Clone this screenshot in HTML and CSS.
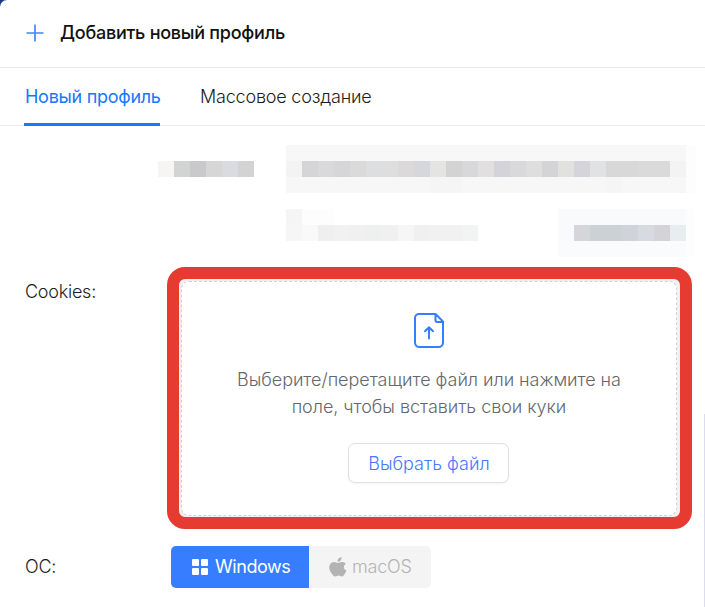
FILE: index.html
```html
<!DOCTYPE html>
<html lang="ru">
<head>
<meta charset="utf-8">
<title>Добавить новый профиль</title>
<link rel="stylesheet" href="styles.css">
</head>
<body>
<main class="panel">
  <header class="header">
    <svg class="plus" width="18" height="18" viewBox="0 0 18 18"><path d="M9 .5v17M.5 9h17"/></svg>
    <h1 class="title">Добавить новый профиль</h1>
  </header>
  <nav class="tabs">
    <a class="tab tab-active"><span class="t-new">Новый профиль</span></a>
    <a class="tab"><span class="t-bulk">Массовое создание</span></a>
  </nav>
  <svg class="mosaic" width="547" height="112" viewBox="0 0 547 112" shape-rendering="crispEdges">
    <path fill="#f6f5f3" d="M0 16h16v16H0z"/><path fill="#d1d4d2" d="M16 16h16v16H16z"/><path fill="#c9c9cb" d="M32 16h16v16H32z"/><path fill="#d6d6d6" d="M48 16h16v16H48z"/><path fill="#dadbe1" d="M64 16h16v16H64z"/><path fill="#d3d3d3" d="M80 16h16v16H80z"/>
    <path fill="#f7f7f7" d="M128 0h400v48H128z"/><path fill="#fdfdfd" d="M528 0h10v48h-10z"/><path fill="#f3f3f3" d="M128 16h16v16h-16zM512 16h16v16h-16z"/><path fill="#f5f5f5" d="M272 32h32v16h-32zM448 32h16v16h-16z"/>
    <path fill="#d5d5d7" d="M144 16h16v16h-16z"/><path fill="#d9d9db" d="M160 16h16v16h-16z"/><path fill="#d6d6d8" d="M176 16h16v16h-16z"/><path fill="#dadada" d="M192 16h16v16h-16z"/><path fill="#dddee0" d="M208 16h16v16h-16z"/><path fill="#dededf" d="M224 16h16v16h-16z"/><path fill="#dcd9da" d="M240 16h16v16h-16z"/><path fill="#d5d7dc" d="M256 16h16v16h-16z"/>
    <path fill="#e4e4e3" d="M272 16h16v16h-16z"/><path fill="#d3d3d4" d="M288 16h16v16h-16z"/><path fill="#d8d8da" d="M304 16h16v16h-16z"/><path fill="#e2dfe0" d="M320 16h16v16h-16z"/><path fill="#d4d3d9" d="M336 16h16v16h-16z"/><path fill="#d9d9db" d="M352 16h16v16h-16z"/><path fill="#dededf" d="M368 16h16v16h-16z"/><path fill="#d4d4d6" d="M384 16h16v16h-16z"/><path fill="#e1e1e0" d="M400 16h16v16h-16z"/><path fill="#d5d4da" d="M416 16h16v16h-16z"/><path fill="#e1e2e4" d="M432 16h16v16h-16z"/><path fill="#d8d8d9" d="M448 16h32v16h-32z"/><path fill="#dadadb" d="M480 16h32v16h-32z"/>
    <path fill="#f5f5f5" d="M128 64h16v16h-16z"/><path fill="#fdfdfd" d="M144 64h32v16h-32z"/><path fill="#f6f6f6" d="M128 80h16v16h-16z"/><path fill="#f9f9f9" d="M144 80h16v16h-16z"/><path fill="#efeff0" d="M160 80h16v16h-16z"/><path fill="#f1f1f2" d="M176 80h16v16h-16z"/><path fill="#f0f0f0" d="M192 80h16v16h-16z"/><path fill="#eef0ef" d="M208 80h16v16h-16z"/><path fill="#f0f0f0" d="M224 80h16v16h-16z"/><path fill="#f6f6f6" d="M240 80h16v16h-16z"/><path fill="#f0f0f0" d="M256 80h16v16h-16z"/><path fill="#f1f1f1" d="M272 80h32v16h-32z"/><path fill="#f1f4f3" d="M304 80h16v16h-16z"/>
    <path fill="#f8fafc" d="M400 64h128v48H400z"/><path fill="#fafbfd" d="M400 96h128v16H400z"/><path fill="#fdfdfe" d="M528 64h8v48h-8z"/><path fill="#d5d6da" d="M416 80h16v16h-16z"/><path fill="#cbd1d4" d="M432 80h16v16h-16z"/><path fill="#ccd1d5" d="M448 80h16v16h-16z"/><path fill="#d0d3d9" d="M464 80h16v16h-16z"/><path fill="#d7dbe1" d="M480 80h16v16h-16z"/><path fill="#d3d3d8" d="M496 80h16v16h-16z"/><path fill="#e8edf0" d="M512 80h16v16h-16z"/>
  </svg>
  <section class="row cookies">
    <div class="label"><span class="t-cookies">Cookies:</span></div>
    <div class="frame">
      <div class="dropzone">
        <svg class="file" width="30" height="35" viewBox="0 0 30 35"><path d="M5 1H21.500L29 8.500V29.500a4.500 4.500 0 0 1-4.500 4.500H5.500A4.500 4.500 0 0 1 1 29.500V5A4 4 0 0 1 5 1ZM21.500 1.300V7.300a1.700 1.700 0 0 0 1.700 1.700h5.500M15 25.500V14.500M11 18.200l4-4 4 4"/></svg>
        <p class="hint"><span class="t-hint">Выберите/перетащите файл или нажмите на</span><br><span class="t-hint">поле, чтобы вставить свои куки</span></p>
        <button class="choose"><span class="t-choose">Выбрать файл</span></button>
      </div>
    </div>
  </section>
  <section class="row os">
    <div class="label"><span class="t-os">ОС:</span></div>
    <div class="segments">
      <div class="segment segment-on">
        <svg width="16" height="16" viewBox="0 0 16 16" fill="#fff"><rect width="7" height="7" rx="1"/><rect x="9" width="7" height="7" rx="1"/><rect y="9" width="7" height="7" rx="1"/><rect x="9" y="9" width="7" height="7" rx="1"/></svg>
        <span class="t-win">Windows</span>
      </div>
      <div class="segment segment-off">
        <svg width="18" height="20" viewBox="0 0 18 20" fill="#b3b3b3"><path d="M12.600 0c.2 1.300-.3 2.500-1 3.400-.8.900-1.900 1.500-3 1.400-.2-1.200.4-2.400 1.100-3.200C10.400.700 11.600.1 12.600 0ZM16.900 6.800c-1.300.8-2 1.900-2 3.300 0 1.600 1 2.900 2.500 3.500-.4 1.200-1 2.300-1.700 3.300-.8 1.200-1.600 2.500-3 2.500-1.300 0-1.700-.8-3.300-.8-1.500 0-2 .8-3.300.8-1.300 0-2.200-1.200-3-2.400C.4 13.800-.8 9.600 1.300 7.100c.9-1.300 2.300-2 3.700-2 1.500 0 2.500.9 3.900.9 1.200 0 2.100-.9 3.900-.9 1.600 0 3 .6 4.100 1.700Z"/></svg>
        <span class="t-mac">macOS</span>
      </div>
    </div>
  </section>
  <div class="edge"></div>
</main>
</body>
</html>
```
FILE: styles.css
```css
* { box-sizing: border-box; }
body { margin: 0; background: #173a80; overflow: hidden; }
.panel {
  position: relative;
  width: 705px;
  height: 607px;
  background: #fff;
  border-top-left-radius: 7px;
  font: 300 18px/27px Inter, "Liberation Sans", sans-serif;
  color: #1c1d21;
}
.panel span, .title { white-space: nowrap; }
.header {
  display: flex;
  align-items: center;
  gap: 16px;
  height: 68px;
  padding: 0 26px 2px;
  border-bottom: 1px solid #e8e8ea;
}
.plus { fill: none; stroke: #4484ff; stroke-width: 1.7; }
.title { margin: 0; font-size: 18px; font-weight: 500; line-height: 27px; letter-spacing: -.25px; color: #111; }
.tabs { display: flex; gap: 40px; height: 58px; padding-left: 24px; border-bottom: 1px solid #ebebed; }
.tab { display: flex; align-items: center; height: 58px; padding-bottom: 1px; }
.tab-active { width: 136px; padding: 2px 0 0 1px; color: #1677ff; font-weight: 400; border-bottom: 3px solid #1677ff; }
.t-new { letter-spacing: -.27px; }
.t-bulk { letter-spacing: -.2px; }
.t-cookies, .t-os { letter-spacing: -.25px; }
.t-hint { letter-spacing: -.05px; }
.t-win { letter-spacing: -.45px; }
.t-mac { letter-spacing: -.2px; }
.mosaic { display: block; margin: 19px 0 10px 158px; }
.row { display: flex; }
.label { padding-left: 25px; flex: none; }
.cookies .label { width: 167px; padding-top: 11px; }
.frame {
  width: 525px;
  height: 262px;
  padding: 2px;
  border: 12px solid #e53b30;
  border-radius: 18px;
  background: #f1f1f5;
}
.dropzone {
  display: flex;
  flex-direction: column;
  align-items: center;
  height: 235px;
  width: 496px;
  padding-top: 31px;
  border: 1px dashed #d2d2d6;
  border-radius: 8px;
  background: #fff;
}
.file { fill: none; stroke: #377dff; stroke-width: 2; stroke-linecap: round; stroke-linejoin: round; }
.hint { margin: 18px 0 23px; text-align: center; color: #66676c; }
.choose {
  width: 161px;
  height: 40px;
  margin-right: 1px;
  padding: 0 0 0 1px;
  border: 1px solid #dedeed;
  border-radius: 7px;
  background: #fff;
  box-shadow: 0 1px 2px rgba(60, 60, 120, .05);
  font: inherit;
  color: #4878ff;
}
.os { margin-top: 17px; }
.os .label { width: 171px; padding-top: 7px; }
.segments { display: flex; height: 42px; border-radius: 5px; overflow: hidden; }
.segment { display: flex; align-items: center; padding-bottom: 1px; }
.segment svg { position: relative; top: .5px; }
.segment-on { width: 138px; padding-left: 21px; gap: 7px; background: #377dff; color: #fff; font-weight: 400; }
.segment-off { width: 122px; padding-left: 20px; gap: 5px; background: #f4f4f4; color: #b3b3b3; }
.edge { position: absolute; right: 0; top: 414px; bottom: 0; width: 1px; background: #dcdcec; }
```
